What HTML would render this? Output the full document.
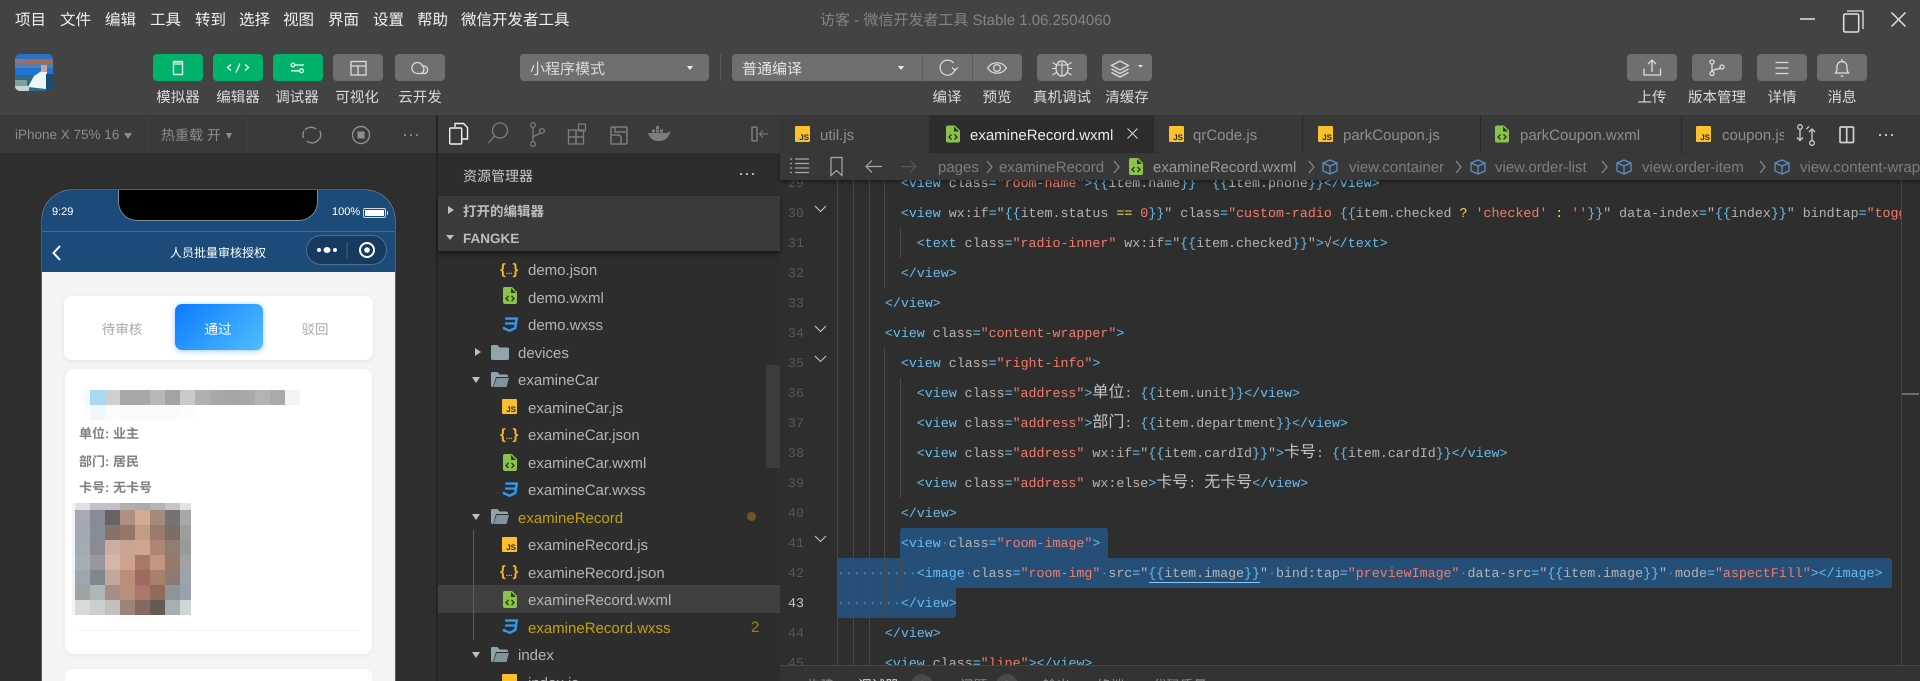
<!DOCTYPE html>
<html lang="zh"><head><meta charset="utf-8"><title>微信开发者工具</title>
<style>
html,body{margin:0;padding:0;width:1920px;height:681px;overflow:hidden;background:#2d2d2d}
#root{position:absolute;left:0;top:0;width:1920px;height:681px;overflow:hidden;font-family:"Liberation Sans","Noto Sans CJK SC",sans-serif;color:#ccc;text-rendering:geometricPrecision}
.a{position:absolute;white-space:nowrap}
.bx{position:absolute}
.m{top:11px;line-height:20px;font-size:15.5px;color:#f0f0f0}
.btn{position:absolute;top:54px;width:50px;height:27px;border-radius:4px;background:#6f6f6f}
.btn.g{background:#00b26a}
.btn svg{position:absolute;left:0;top:0;width:50px;height:27px;fill:none;stroke:#dcdcdc;stroke-width:1.3}
.btn.g svg{stroke:#f0fff8}
.lb{top:88px;line-height:20px;font-size:14.5px;color:#dadada;transform:translateX(-50%)}
.tab{top:125px;line-height:22px;font-size:15px;color:#8f8f8f}
.tr{line-height:29px;font-size:15px;color:#b4b4b4;height:27px}
.js{position:absolute;width:15px;height:15px;background:#fbc02d;color:#2c2c10;font:bold 8px/9px "Liberation Sans",sans-serif;text-align:right;padding:6px 1px 0 0;box-sizing:border-box;border-radius:1px;font-style:normal}
.js2{height:16px;padding-top:7px}
.jn{position:absolute;color:#f4b529;font:bold 15px/16px "Liberation Sans",sans-serif;font-style:normal;width:21px;white-space:nowrap}
.jn small{font-size:8px;vertical-align:0}
.ic{position:absolute}
.tg{position:absolute;width:0;height:0;border-style:solid}
.rt{border-width:4.5px 0 4.5px 6px;border-color:transparent transparent transparent #c0c0c0}
.dn{border-width:6px 4.5px 0 4.5px;border-color:#c0c0c0 transparent transparent transparent}
.ye{color:#c2a00d}
.bc{top:157px;line-height:22px;font-size:15px;color:#7d7d7d}
.ch{position:absolute;top:160px;width:7px;height:14px;fill:none;stroke:#8a8a8a;stroke-width:1.2}
.gd{position:absolute;width:1px;background:#484848}
#code,#nums{font:13.3px/30px "Liberation Mono","Noto Sans CJK SC",monospace}
#code{position:absolute;left:837px;top:169px;width:1064px;height:496px;overflow:hidden;color:#b3b3b3}
#code div,#nums div{height:30px;white-space:pre}
#code b{font-weight:normal;color:#66bdf0}
#code em{font-style:normal;color:#f07c6c}
#code var{font-style:normal;color:#f5d94e}
#code u{text-decoration:none;font-size:16px;line-height:1;color:#c4c4c4;font-family:"Noto Sans CJK SC",sans-serif}
#code i{font-style:normal;color:#5b87a8}
#nums{position:absolute;left:780px;top:169px;width:24px;height:496px;overflow:hidden;text-align:right;color:#575757}
.sel{position:absolute;background:#264f78}
.fold{position:absolute;left:814px;width:13px;height:8px;fill:none;stroke:#c5c5c5;stroke-width:1.1}
.px{position:absolute;display:grid}
.px span{display:block}
.pt{font-size:13px;line-height:20px;color:#808080;font-weight:bold;left:79px}
</style></head><body><div id="root">

<!-- top bar -->
<div class="bx" style="left:0;top:0;width:1920px;height:115px;background:#434343"></div>
<span class="a m" style="left:15px">项目</span><span class="a m" style="left:60px">文件</span><span class="a m" style="left:105px">编辑</span><span class="a m" style="left:150px">工具</span><span class="a m" style="left:195px">转到</span><span class="a m" style="left:239px">选择</span><span class="a m" style="left:283px">视图</span><span class="a m" style="left:328px">界面</span><span class="a m" style="left:373px">设置</span><span class="a m" style="left:417px">帮助</span><span class="a m" style="left:461px">微信开发者工具</span>
<span class="a" style="left:820px;top:11px;line-height:20px;font-size:15px;color:#848484">访客 - 微信开发者工具 Stable 1.06.2504060</span>
<svg class="ic" style="left:1795px;top:5px" width="120" height="28" fill="none" stroke="#e4e4e4" stroke-width="1.5"><path d="M5 14h15" stroke="#bbb" stroke-width="2"/><rect x="48.7" y="9" width="15" height="18" rx="1.5"/><path d="M52 6h16v18" stroke-width="1.3"/><path d="M96.5 7.5l14 14M110.500 7.500l-14 14"/></svg>

<!-- avatar -->
<div class="bx" style="left:15px;top:54px;width:38px;height:37px;border-radius:5px;overflow:hidden;background:#1b6ec4">
<svg width="38" height="37" style="display:block"><rect width="38" height="6" fill="#2a72c4"/><rect y="5" width="38" height="4" fill="#8a7486"/><rect x="10" y="5" width="28" height="5" fill="#a26a55"/><rect y="9" width="38" height="5" fill="#5d7ca2"/><rect y="14" width="38" height="7" fill="#1d74d2"/><rect y="21" width="38" height="16" fill="#2f6a86"/><rect y="26" width="12" height="11" fill="#7fa0a0"/><path d="M13 33l6-11 9-6 4 2-1 17z" fill="#eef4f7"/><rect x="26" y="11" width="6" height="7" fill="#caa690"/><rect x="0" y="32" width="14" height="5" fill="#c8d4d4"/><rect x="31" y="20" width="7" height="17" fill="#1c4c74"/></svg></div>

<!-- left buttons -->
<div class="btn g" style="left:153px"><svg><rect x="20.500" y="7.500" width="9" height="13"/><rect x="21" y="8" width="8" height="3" fill="#8fdcb8" stroke="none"/></svg></div>
<div class="btn g" style="left:213px"><svg><path d="M18 10.500l-3.500 3 3.500 3M32 10.500l3.500 3-3.500 3M27 9.500l-4 9"/></svg></div>
<div class="btn g" style="left:273px"><svg><circle cx="20" cy="11" r="1.800"/><path d="M22 11h9M18 16.800h8"/><circle cx="28.500" cy="16.800" r="1.900"/></svg></div>
<div class="btn" style="left:333px"><svg><rect x="18" y="7.500" width="15" height="13.500"/><path d="M18 12h15M25 12v9"/></svg></div>
<div class="btn" style="left:395px"><svg><path d="M22.500 19.500a5.500 5.500 0 1 1 5-7.500l2 0a4 4 0 0 1 .8 7.500zM26.500 19c3-1 3-4 1.500-7"/></svg></div>
<span class="a lb" style="left:178px">模拟器</span><span class="a lb" style="left:238px">编辑器</span><span class="a lb" style="left:297px">调试器</span><span class="a lb" style="left:357px">可视化</span><span class="a lb" style="left:420px">云开发</span>

<!-- mode selectors -->
<div class="bx" style="left:520px;top:54px;width:189px;height:27px;border-radius:4px;background:#6f6f6f"></div>
<span class="a" style="left:530px;top:60px;line-height:20px;font-size:15px;color:#dcdcdc">小程序模式</span>
<div class="tg dn" style="left:687px;top:66px;border-width:4px 3px 0 3px;border-color:#eee transparent transparent transparent"></div>
<div class="bx" style="left:720px;top:54px;width:1px;height:27px;background:#585858"></div>
<div class="bx" style="left:732px;top:54px;width:290px;height:27px;border-radius:4px;background:#6f6f6f"></div>
<div class="bx" style="left:922px;top:54px;width:1px;height:27px;background:#5c5c5c"></div>
<div class="bx" style="left:972px;top:54px;width:1px;height:27px;background:#5c5c5c"></div>
<span class="a" style="left:742px;top:60px;line-height:20px;font-size:15px;color:#e4e4e4">普通编译</span>
<div class="tg dn" style="left:898px;top:66px;border-width:4px 3px 0 3px;border-color:#eee transparent transparent transparent"></div>
<svg class="ic" style="left:936px;top:58px" width="26" height="20" fill="none" stroke="#dcdcdc" stroke-width="1.200"><path d="M17.500 5a7.500 7.500 0 1 0 1.500 6"/><path d="M16 9.500l3.200 2.800 2.800-3"/></svg>
<svg class="ic" style="left:985px;top:59px" width="24" height="18" fill="none" stroke="#dcdcdc" stroke-width="1.200"><path d="M2.500 9c5-7 14-7 19 0-5 7-14 7-19 0z"/><circle cx="12" cy="9" r="3.400"/></svg>
<div class="btn" style="left:1037px"><svg><ellipse cx="25" cy="14.500" rx="6" ry="7.500"/><path d="M21 8.500c1-2 7-2 8 0M25 8v14M15.500 8.500l4 2.500M34.500 8.500l-4 2.500M15 14.500h4M35 14.500h-4M15.500 21l4-2.500M34.500 21l-4-2.500" stroke-width="1.100"/><path d="M20 11h10" stroke-width="1"/></svg></div>
<div class="btn" style="left:1102px"><svg><path d="M9.500 11.500l8.500-4.500 8.500 4.500-8.500 4.500zM9.500 15l8.500 4.500 8.500-4.500M9.500 18.500l8.500 4.500 8.500-4.500"/><path d="M36 11h5l-2.500 2.500z" fill="#eee" stroke="none"/></svg></div>
<span class="a lb" style="left:947px">编译</span><span class="a lb" style="left:997px">预览</span><span class="a lb" style="left:1062px">真机调试</span><span class="a lb" style="left:1127px">清缓存</span>

<!-- right buttons -->
<div class="btn" style="left:1627px"><svg><path d="M17 14.500v6.500h16.500v-6.500M25 18v-11.500M21 10l4-4 4 4"/></svg></div>
<div class="btn" style="left:1692px"><svg><circle cx="20" cy="8" r="2"/><circle cx="20" cy="19.500" r="2"/><circle cx="30" cy="13" r="2"/><path d="M20 10v7.500M28.500 14.500c-4 .8-8 1-8.500 3"/></svg></div>
<div class="btn" style="left:1757px"><svg><path d="M18.500 8.500h13M18.500 14h13M18.500 19.500h13"/></svg></div>
<div class="btn" style="left:1817px"><svg><path d="M18.500 19c1.500-2 1.500-3 1.500-6.500a5 5 0 0 1 10 0c0 3.500 0 4.500 1.500 6.500zM25 5v2.500M23.500 22h3"/></svg></div>
<span class="a lb" style="left:1652px">上传</span><span class="a lb" style="left:1717px">版本管理</span><span class="a lb" style="left:1782px">详情</span><span class="a lb" style="left:1842px">消息</span>

<!-- simulator toolbar -->
<div class="bx" style="left:0;top:115px;width:436px;height:38px;background:#3a3a3a"></div>
<div class="bx" style="left:147px;top:115px;width:1px;height:38px;background:#3e3e3e"></div>
<div class="bx" style="left:247px;top:115px;width:1px;height:38px;background:#3e3e3e"></div>
<span class="a" style="left:15px;top:125px;line-height:20px;font-size:13.500px;color:#8c8c8c">iPhone X 75% 16</span>
<div class="tg dn" style="left:124px;top:133px;border-width:6px 4px 0 4px;border-color:#8c8c8c transparent transparent transparent"></div>
<span class="a" style="left:161px;top:125px;line-height:20px;font-size:14px;color:#8c8c8c">热重载 开</span>
<div class="tg dn" style="left:226px;top:133px;border-width:6px 3.500px 0 3.500px;border-color:#8c8c8c transparent transparent transparent"></div>
<svg class="ic" style="left:300px;top:123px" width="125" height="24" fill="none" stroke="#8e8e8e" stroke-width="1.400"><path d="M5 7a8 8 0 0 1 11-1M19 16a8 8 0 0 1-12 2M3.500 15a8 8 0 0 1 .5-7M19.800 8a8 8 0 0 1-.3 8"/><circle cx="61" cy="12" r="8.500"/><rect x="57.500" y="8.500" width="7" height="7" fill="#8e8e8e" stroke="none"/><g fill="#8e8e8e" stroke="none"><circle cx="105" cy="12" r="1.100"/><circle cx="111" cy="12" r="1.100"/><circle cx="117" cy="12" r="1.100"/></g></svg>

<!-- phone -->
<div class="bx" style="left:0;top:153px;width:436px;height:528px;background:#2e2e2e"></div>
<div class="bx" style="left:436px;top:115px;width:2px;height:566px;background:#242424"></div>
<div class="bx" style="left:42px;top:190px;width:353px;height:491px;border-radius:30px 30px 0 0;background:#f4f4f4;overflow:hidden;box-shadow:0 0 0 .5px #8a8a8a">
<div class="bx" style="left:0;top:0;width:353px;height:82px;background:#1c4a79"></div>
<div class="bx" style="left:0;top:41px;width:353px;height:1px;background:#456c94"></div>
<div class="bx" style="left:77px;top:-1px;width:198px;height:31px;background:#000;border-radius:0 0 18px 18px;box-shadow:0 0 0 1px #7d8a98"></div>
</div>
<span class="a" style="left:52px;top:203px;line-height:18px;font-size:11px;color:#fff">9:29</span>
<span class="a" style="left:332px;top:203px;line-height:18px;font-size:11px;color:#fff">100%</span>
<div class="bx" style="left:363px;top:208px;width:21px;height:8px;border:1px solid #cfd8e2;box-sizing:content-box;border-radius:2px"><div style="position:absolute;left:1px;top:1px;right:1px;bottom:1px;background:#fff"></div></div>
<div class="bx" style="left:387px;top:211px;width:1px;height:4px;background:#cfd8e2"></div>
<svg class="ic" style="left:50px;top:243px" width="14" height="20" fill="none" stroke="#fff" stroke-width="2"><path d="M10 3l-6.500 7 6.500 7"/></svg>
<span class="a" style="left:218px;top:243px;line-height:20px;font-size:12px;color:#fff;transform:translateX(-50%)">人员批量审核授权</span>
<div class="bx" style="left:306px;top:235px;width:81px;height:30px;border-radius:15px;background:#163a60;box-sizing:border-box;border:1px solid #506f8f"></div>
<svg class="ic" style="left:306px;top:235px" width="81" height="30"><circle cx="13" cy="15" r="2" fill="#fff"/><ellipse cx="21" cy="15" rx="3.500" ry="3" fill="#fff"/><circle cx="29" cy="15" r="2" fill="#fff"/><path d="M41 7v16" stroke="#40607f"/><circle cx="61" cy="15" r="7" fill="none" stroke="#fff" stroke-width="2"/><circle cx="61" cy="15" r="2.800" fill="#fff"/></svg>

<!-- phone content -->
<div class="bx" style="left:64px;top:296px;width:309px;height:64px;background:#fff;border-radius:8px;box-shadow:0 1px 4px rgba(0,0,0,.08)"></div>
<div class="bx" style="left:175px;top:304px;width:88px;height:46px;border-radius:7px;background:linear-gradient(135deg,#0a7bff,#52bdff);box-shadow:0 1px 6px rgba(40,140,255,.45)"></div>
<span class="a" style="left:122px;top:320px;line-height:20px;font-size:13.500px;color:#a8a8a8;transform:translateX(-50%)">待审核</span>
<span class="a" style="left:218px;top:320px;line-height:20px;font-size:13.500px;color:#fff;transform:translateX(-50%)">通过</span>
<span class="a" style="left:315px;top:320px;line-height:20px;font-size:13.500px;color:#a8a8a8;transform:translateX(-50%)">驳回</span>
<div class="bx" style="left:65px;top:369px;width:307px;height:285px;background:#fff;border-radius:8px;box-shadow:0 1px 4px rgba(0,0,0,.07)"></div>
<div class="bx" style="left:65px;top:669px;width:307px;height:12px;background:#fff;border-radius:8px 8px 0 0"></div>
<div class="px" style="left:84px;top:390px;grid-template-columns:6px repeat(14,15px);grid-template-rows:15px 15px">
<span style="background:#f5faff"></span><span style="background:#a9d8f2"></span><span style="background:#cfcfcf"></span><span style="background:#a8a8a8"></span><span style="background:#a8a8a8"></span><span style="background:#b8b8b8"></span><span style="background:#a3a3a3"></span><span style="background:#c9c9c9"></span><span style="background:#b0b0b0"></span><span style="background:#a8a8a8"></span><span style="background:#a5a5a5"></span><span style="background:#a8a8a8"></span><span style="background:#b3b3b3"></span><span style="background:#a9a9a9"></span><span style="background:#f3f3f3"></span>
<span style="background:#fbfdff"></span><span style="background:#eff6fd"></span><span style="background:#fbfbfb"></span><span style="background:#fafafa"></span><span style="background:#fafafa"></span><span style="background:#fafafa"></span><span style="background:#fafafa"></span><span style="background:#fcfcfc"></span><span></span><span></span><span></span><span></span><span></span><span></span><span></span>
</div>
<span class="a pt" style="top:424px">单位: 业主</span>
<span class="a pt" style="top:452px">部门: 居民</span>
<span class="a pt" style="top:478px">卡号: 无卡号</span>
<div class="bx" style="left:72px;top:503px;width:3px;height:112px;background:#f3f3f3"></div>
<div class="px" style="left:75px;top:503px;grid-template-columns:repeat(7,15px) 11px;grid-template-rows:7px repeat(7,15px)">
<span style="background:#e0e0e5"></span><span style="background:#c0c0c8"></span><span style="background:#c0c0c6"></span><span style="background:#b0aeae"></span><span style="background:#aeaaa8"></span><span style="background:#b5b5b5"></span><span style="background:#c5c5c5"></span><span style="background:#e2e2e2"></span>
<span style="background:#a5a9b3"></span><span style="background:#888b96"></span><span style="background:#676264"></span><span style="background:#ae9080"></span><span style="background:#d2ab98"></span><span style="background:#a58a7a"></span><span style="background:#757273"></span><span style="background:#a8a8a8"></span>
<span style="background:#a3a9b3"></span><span style="background:#858d9b"></span><span style="background:#8a7168"></span><span style="background:#957768"></span><span style="background:#c19d88"></span><span style="background:#997a6b"></span><span style="background:#7b6e68"></span><span style="background:#9d9d9e"></span>
<span style="background:#a3aab4"></span><span style="background:#8a8a95"></span><span style="background:#ccaea0"></span><span style="background:#c9a693"></span><span style="background:#cfa592"></span><span style="background:#ae8673"></span><span style="background:#8f7d73"></span><span style="background:#9a9a9c"></span>
<span style="background:#a4aeb5"></span><span style="background:#9a969b"></span><span style="background:#d5b5a8"></span><span style="background:#cfa28f"></span><span style="background:#a67a68"></span><span style="background:#c29680"></span><span style="background:#97786a"></span><span style="background:#9fa3a8"></span>
<span style="background:#a0a6ae"></span><span style="background:#7f878d"></span><span style="background:#c2a89c"></span><span style="background:#bb8d7b"></span><span style="background:#a0695f"></span><span style="background:#a87f6b"></span><span style="background:#8b7b75"></span><span style="background:#9da3ab"></span>
<span style="background:#9ea3a5"></span><span style="background:#b0b5b6"></span><span style="background:#a38f85"></span><span style="background:#ba8f79"></span><span style="background:#a9786a"></span><span style="background:#926c5a"></span><span style="background:#8d949a"></span><span style="background:#9ca2ab"></span>
<span style="background:#d8d9d9"></span><span style="background:#cbcecf"></span><span style="background:#c3bfbb"></span><span style="background:#9b857b"></span><span style="background:#86695e"></span><span style="background:#665a54"></span><span style="background:#a8aeb2"></span><span style="background:#d0d5d8"></span>
</div>
<div class="bx" style="left:79px;top:630px;width:280px;border-top:1px dotted #e8e8e8"></div>

<!-- explorer -->
<div class="bx" style="left:438px;top:115px;width:342px;height:38px;background:#3a3a3a"></div>
<div class="bx" style="left:438px;top:153px;width:342px;height:528px;background:#2d2d2d"></div>
<svg class="ic" style="left:445px;top:120px" width="330" height="30" fill="none" stroke="#7d7d7d" stroke-width="1.300">
<g stroke="#f2f2f2" stroke-width="1.400"><path d="M10 7V3.500h8.500l4 4V19H17"/><rect x="4.700" y="8" width="12" height="16" rx="1"/></g>
<circle cx="55" cy="10.500" r="7.500"/><path d="M49.500 16l-6 7"/>
<circle cx="88" cy="5" r="2.400"/><circle cx="88" cy="24" r="2.400"/><circle cx="97" cy="11" r="2.400"/><path d="M88 7.500v14M95.500 13c-4 3-7 2-7.500 5"/>
<rect x="123.500" y="10" width="7.500" height="7"/><rect x="131" y="10" width="7.500" height="7"/><rect x="123.500" y="17" width="7.500" height="7"/><rect x="131" y="17" width="7.500" height="7"/><rect x="133.500" y="4" width="7" height="7" rx="1"/>
<rect x="166" y="7" width="16" height="17" rx="1" stroke-width="1.500"/><path d="M170 7v5h11M166 15h7c2 0 3 1 3 3v6" stroke-width="1.500"/>
<path d="M203 13h18c2 0 3-1 3.500-2 1 1 1 2 0 3-2 5-6 7-10.500 7-6 0-9-2-11-8z" fill="#7d7d7d" stroke="none"/><g fill="#7d7d7d" stroke="none"><rect x="207" y="9.500" width="3" height="3"/><rect x="211" y="9.500" width="3" height="3"/><rect x="215" y="9.500" width="3" height="3"/><rect x="211" y="6" width="3" height="3"/></g>
<rect x="307" y="7" width="5" height="14" rx="1" stroke-width="1.500"/><path d="M323 14h-8M318 10.500l-3.500 3.500 3.500 3.500" stroke-width="1.100"/>
</svg>
<span class="a" style="left:463px;top:166px;line-height:20px;font-size:14px;color:#c8c8c8">资源管理器</span>
<svg class="ic" style="left:738px;top:170px" width="18" height="8" fill="#ddd"><circle cx="3" cy="4" r="1"/><circle cx="9" cy="4" r="1"/><circle cx="15" cy="4" r="1"/></svg>
<div class="bx" style="left:438px;top:196px;width:342px;height:55px;background:#3a3a3a;box-shadow:0 3px 5px rgba(0,0,0,.45);z-index:2"></div>
<div class="a" style="left:463px;top:202px;line-height:20px;font-size:13.500px;font-weight:bold;color:#bdbdbd;z-index:3">打开的编辑器</div>
<div class="a" style="left:463px;top:229px;line-height:20px;font-size:13.500px;font-weight:bold;color:#bdbdbd;z-index:3">FANGKE</div>
<div class="tg rt" style="left:448px;top:206px;z-index:3"></div>
<div class="tg dn" style="left:446px;top:235px;border-width:5.500px 4px 0 4px;z-index:3"></div>

<svg width="0" height="0" style="position:absolute"><defs>
<symbol id="wx" viewBox="0 0 14 17"><path d="M2 0h7l5 5v10a2 2 0 0 1-2 2H2a2 2 0 0 1-2-2V2a2 2 0 0 1 2-2z" fill="#8bc34a"/><path d="M8 1v5h5z" fill="#2d3a1c"/><path d="M5.500 9l-2.500 2.500 2.500 2.500M8.500 9l2.500 2.500-2.500 2.500" fill="none" stroke="#26320f" stroke-width="1.300"/></symbol>
<symbol id="cs" viewBox="0 0 16 16"><path d="M3.200 1.600h11.500l-1.400 9.400-5.600 2.800L2 11.400 1.800 10" fill="none" stroke="#2f9bf5" stroke-width="2.400"/><path d="M3 6.500h10.500" stroke="#2f9bf5" stroke-width="2.200"/></symbol>
<symbol id="fc" viewBox="0 0 18 15"><path d="M1.500 0h5l2 2.500h8a1.500 1.500 0 0 1 1.500 1.500v9.500a1.500 1.500 0 0 1-1.500 1.500h-15A1.500 1.500 0 0 1 0 13.500v-12A1.500 1.500 0 0 1 1.500 0z" fill="#90a4ae"/></symbol>
<symbol id="fo" viewBox="0 0 18 15"><path d="M1.500 0h5l2 2.500h7A1.500 1.500 0 0 1 17 4v1H5L2 15H1.500A1.500 1.500 0 0 1 0 13.500v-12A1.500 1.500 0 0 1 1.500 0z" fill="#90a4ae"/><path d="M5.500 6H18l-2.500 9H2.500z" fill="#7f939d"/></symbol>
<symbol id="cb" viewBox="0 0 18 18"><path d="M9 2l7 3v8l-7 3-7-3V5zM2 5l7 3 7-3M9 8v8" fill="none" stroke="#5791c9" stroke-width="1.300"/></symbol>
</defs></svg>

<!-- tree -->
<div class="bx" style="left:438px;top:585px;width:342px;height:28px;background:#404040"></div>
<div class="bx" style="left:766px;top:365px;width:14px;height:103px;background:#3c3c3c"></div>
<div class="bx" style="left:473px;top:530px;width:1px;height:110px;background:#5a5a5a"></div>

<i class="jn" style="left:500px;top:262px">{<small>...</small>}</i><span class="a tr" style="left:528px;top:256px">demo.json</span>
<svg class="ic" style="left:503px;top:287px" width="14" height="17"><use href="#wx"/></svg><span class="a tr" style="left:528px;top:284px">demo.wxml</span>
<svg class="ic" style="left:502px;top:317px" width="16" height="16"><use href="#cs"/></svg><span class="a tr" style="left:528px;top:311px">demo.wxss</span>
<div class="tg rt" style="left:475px;top:348px"></div><svg class="ic" style="left:491px;top:345px" width="18" height="15"><use href="#fc"/></svg><span class="a tr" style="left:518px;top:339px">devices</span>
<div class="tg dn" style="left:472px;top:377px"></div><svg class="ic" style="left:491px;top:372px" width="18" height="15"><use href="#fo"/></svg><span class="a tr" style="left:518px;top:366px">examineCar</span>
<i class="js" style="left:502px;top:399px">JS</i><span class="a tr" style="left:528px;top:394px">examineCar.js</span>
<i class="jn" style="left:500px;top:427px">{<small>...</small>}</i><span class="a tr" style="left:528px;top:421px">examineCar.json</span>
<svg class="ic" style="left:503px;top:454px" width="14" height="17"><use href="#wx"/></svg><span class="a tr" style="left:528px;top:449px">examineCar.wxml</span>
<svg class="ic" style="left:502px;top:482px" width="16" height="16"><use href="#cs"/></svg><span class="a tr" style="left:528px;top:476px">examineCar.wxss</span>
<div class="tg dn" style="left:472px;top:514px"></div><svg class="ic" style="left:491px;top:509px" width="18" height="15"><use href="#fo"/></svg><span class="a tr ye" style="left:518px;top:504px">examineRecord</span>
<div class="bx" style="left:747px;top:512px;width:9px;height:9px;border-radius:50%;background:#6e5a1e"></div>
<i class="js" style="left:502px;top:537px">JS</i><span class="a tr" style="left:528px;top:531px">examineRecord.js</span>
<i class="jn" style="left:500px;top:564px">{<small>...</small>}</i><span class="a tr" style="left:528px;top:559px">examineRecord.json</span>
<svg class="ic" style="left:503px;top:591px" width="14" height="17"><use href="#wx"/></svg><span class="a tr" style="left:528px;top:586px">examineRecord.wxml</span>
<svg class="ic" style="left:502px;top:619px" width="16" height="16"><use href="#cs"/></svg><span class="a tr ye" style="left:528px;top:614px">examineRecord.wxss</span>
<span class="a tr" style="left:751px;top:613px;color:#a0860f">2</span>
<div class="tg dn" style="left:472px;top:652px"></div><svg class="ic" style="left:491px;top:647px" width="18" height="15"><use href="#fo"/></svg><span class="a tr" style="left:518px;top:641px">index</span>
<i class="js" style="left:502px;top:674px">JS</i><span class="a tr" style="left:528px;top:669px">index.js</span>

<!-- tabs -->
<div class="bx" style="left:780px;top:115px;width:1140px;height:38px;background:#383838"></div>
<div class="bx" style="left:929px;top:115px;width:224px;height:38px;background:#2d2d2d"></div>
<div class="bx" style="left:1153px;top:115px;width:1px;height:38px;background:#2a2a2a"></div>
<div class="bx" style="left:1302px;top:115px;width:1px;height:38px;background:#2a2a2a"></div>
<div class="bx" style="left:1480px;top:115px;width:1px;height:38px;background:#2a2a2a"></div>
<div class="bx" style="left:1681px;top:115px;width:1px;height:38px;background:#2a2a2a"></div>
<i class="js js2" style="left:795px;top:126px">JS</i><span class="a tab" style="left:820px">util.js</span>
<svg class="ic" style="left:946px;top:125px" width="14" height="18"><use href="#wx"/></svg><span class="a tab" style="left:970px;color:#e8e8e8">examineRecord.wxml</span>
<svg class="ic" style="left:1127px;top:128px" width="11" height="11" fill="none" stroke="#d0d0d0" stroke-width="1.100"><path d="M.5.500l10 10M10.500.500l-10 10"/></svg>
<i class="js js2" style="left:1169px;top:126px">JS</i><span class="a tab" style="left:1193px">qrCode.js</span>
<i class="js js2" style="left:1318px;top:126px">JS</i><span class="a tab" style="left:1343px">parkCoupon.js</span>
<svg class="ic" style="left:1495px;top:125px" width="14" height="18"><use href="#wx"/></svg><span class="a tab" style="left:1520px">parkCoupon.wxml</span>
<i class="js js2" style="left:1696px;top:126px">JS</i><span class="a tab" style="left:1722px;width:62px;overflow:hidden">coupon.js</span>
<svg class="ic" style="left:1794px;top:122px" width="110" height="26" fill="none" stroke="#cfcfcf" stroke-width="1.300"><circle cx="6" cy="5" r="2.300"/><path d="M6 7.500v10"/><path d="M3 15.500l3 3 3-3"/><circle cx="18" cy="21" r="2.300"/><path d="M18 18.500v-10"/><path d="M15 10l3-3 3 3M15 4.500l-2.500 2.500"/><rect x="46" y="5" width="13.500" height="15.500" rx="1" stroke-width="1.700"/><path d="M52.700 5v15" stroke-width="1.700"/><g fill="#cfcfcf" stroke="none"><circle cx="86" cy="13" r="1.100"/><circle cx="92" cy="13" r="1.100"/><circle cx="98" cy="13" r="1.100"/></g></svg>

<!-- selection -->
<div class="bx" style="left:780px;top:153px;width:1140px;height:528px;background:#2e2e2e"></div>
<div class="sel" style="left:900px;top:528px;width:208px;height:32px;border-radius:3px 3px 0 0"></div>
<div class="sel" style="left:837px;top:558px;width:1055px;height:30px;border-radius:3px"></div>
<div class="sel" style="left:837px;top:586px;width:119px;height:32px;border-radius:0 0 3px 3px"></div>

<!-- guides -->
<div class="gd" style="left:837px;top:180px;height:485px"></div>
<div class="gd" style="left:853px;top:180px;height:485px"></div>
<div class="gd" style="left:869px;top:180px;height:485px"></div>
<div class="gd" style="left:884px;top:180px;height:108px"></div>
<div class="gd" style="left:884px;top:348px;height:270px"></div>
<div class="gd" style="left:900px;top:228px;height:30px"></div>
<div class="gd" style="left:900px;top:378px;height:120px"></div>
<div class="gd" style="left:900px;top:558px;height:30px"></div>

<!-- line numbers -->
<div id="nums"><div>29</div><div>30</div><div>31</div><div>32</div><div>33</div><div>34</div><div>35</div><div>36</div><div>37</div><div>38</div><div>39</div><div>40</div><div>41</div><div>42</div><div style="color:#c6c6c6">43</div><div>44</div><div>45</div></div>

<svg class="fold" style="top:205px" viewBox="0 0 13 8"><path d="M1 1l5.500 5.500L12 1"/></svg>
<svg class="fold" style="top:325px" viewBox="0 0 13 8"><path d="M1 1l5.500 5.500L12 1"/></svg>
<svg class="fold" style="top:355px" viewBox="0 0 13 8"><path d="M1 1l5.500 5.500L12 1"/></svg>
<svg class="fold" style="top:535px" viewBox="0 0 13 8"><path d="M1 1l5.500 5.500L12 1"/></svg>

<!-- code -->
<div id="code"><div>        <b>&lt;view</b> class<b>=</b><em>"room-name"</em><b>&gt;{{</b>item.name<b>}}</b>  <b>{{</b>item.phone<b>}}&lt;/view&gt;</b></div><div>        <b>&lt;view</b> wx:if<b>=</b>"<b>{{</b>item.status <var>==</var> <em>0</em><b>}}</b>" class<b>=</b><em>"custom-radio </em><b>{{</b>item.checked <var>?</var> <em>'checked'</em> <var>:</var> <em>''</em><b>}}</b>" data-index<b>=</b>"<b>{{</b>index<b>}}</b>" bindtap<b>=</b><em>"toggleSelection"</em><b>&gt;</b></div><div>          <b>&lt;text</b> class<b>=</b><em>"radio-inner"</em> wx:if<b>=</b>"<b>{{</b>item.checked<b>}}</b>"<b>&gt;</b>√<b>&lt;/text&gt;</b></div><div>        <b>&lt;/view&gt;</b></div><div>      <b>&lt;/view&gt;</b></div><div>      <b>&lt;view</b> class<b>=</b><em>"content-wrapper"</em><b>&gt;</b></div><div>        <b>&lt;view</b> class<b>=</b><em>"right-info"</em><b>&gt;</b></div><div>          <b>&lt;view</b> class<b>=</b><em>"address"</em><b>&gt;</b><u>单位</u>: <b>{{</b>item.unit<b>}}&lt;/view&gt;</b></div><div>          <b>&lt;view</b> class<b>=</b><em>"address"</em><b>&gt;</b><u>部门</u>: <b>{{</b>item.department<b>}}&lt;/view&gt;</b></div><div>          <b>&lt;view</b> class<b>=</b><em>"address"</em> wx:if<b>=</b>"<b>{{</b>item.cardId<b>}}</b>"<b>&gt;</b><u>卡号</u>: <b>{{</b>item.cardId<b>}}&lt;/view&gt;</b></div><div>          <b>&lt;view</b> class<b>=</b><em>"address"</em> wx:else<b>&gt;</b><u>卡号</u>: <u>无卡号</u><b>&lt;/view&gt;</b></div><div>        <b>&lt;/view&gt;</b></div><div>        <b>&lt;view</b><i>·</i>class<b>=</b><em>"room-image"</em><b>&gt;</b></div><div><i>··········</i><b>&lt;image</b><i>·</i>class<b>=</b><em>"room-img"</em><i>·</i>src<b>=</b>"<b>{{</b>item.image<b>}}</b>"<i>·</i>bind:tap<b>=</b><em>"previewImage"</em><i>·</i>data-src<b>=</b>"<b>{{</b>item.image<b>}}</b>"<i>·</i>mode<b>=</b><em>"aspectFill"</em><b>&gt;&lt;/image&gt;</b></div><div><i>········</i><b>&lt;/view&gt;</b></div><div>      <b>&lt;/view&gt;</b></div><div>      <b>&lt;view</b> class<b>=</b><em>"line"</em><b>&gt;&lt;/view&gt;</b></div></div>

<div class="bx" style="left:1149px;top:582px;width:111px;height:1px;background:#8fc8ec"></div>

<!-- scroll ruler -->
<div class="bx" style="left:1901px;top:180px;width:1px;height:485px;background:#454545"></div>
<div class="bx" style="left:1902px;top:393px;width:17px;height:2px;background:#6c6c6c"></div>

<!-- breadcrumb -->
<div class="bx" style="left:780px;top:153px;width:1140px;height:27px;background:#383838;box-shadow:0 2px 4px rgba(0,0,0,.4)"></div>
<svg class="ic" style="left:785px;top:153px" width="140" height="27" fill="none" stroke="#a8a8a8" stroke-width="1.200"><path d="M10 6h14M10 10.500h14M10 15h14M10 19.500h14M5 6h2M5 10.500h2M5 15h2M5 19.500h2"/><path d="M46 4.500h11v18l-5.500-5-5.500 5z"/><path d="M97 13.500H81M87 7.500l-6 6 6 6"/><path d="M116 13.500h15M125 7.500l6 6-6 6" stroke="#565656"/></svg>
<span class="a bc" style="left:938px">pages</span>
<span class="a bc" style="left:999px">examineRecord</span>
<span class="a bc" style="left:1153px;color:#9a9a9a">examineRecord.wxml</span>
<span class="a bc" style="left:1349px">view.container</span>
<span class="a bc" style="left:1495px">view.order-list</span>
<span class="a bc" style="left:1642px">view.order-item</span>
<span class="a bc" style="left:1800px;width:120px;overflow:hidden">view.content-wrapper</span>
<svg class="ch" style="left:986px"><path d="M1 1l5 6-5 6"/></svg>
<svg class="ch" style="left:1113px"><path d="M1 1l5 6-5 6"/></svg>
<svg class="ch" style="left:1308px"><path d="M1 1l5 6-5 6"/></svg>
<svg class="ch" style="left:1455px"><path d="M1 1l5 6-5 6"/></svg>
<svg class="ch" style="left:1601px"><path d="M1 1l5 6-5 6"/></svg>
<svg class="ch" style="left:1759px"><path d="M1 1l5 6-5 6"/></svg>
<svg class="ic" style="left:1129px;top:158px" width="14" height="17"><use href="#wx"/></svg>
<svg class="ic" style="left:1321px;top:158px" width="18" height="18"><use href="#cb"/></svg>
<svg class="ic" style="left:1469px;top:158px" width="18" height="18"><use href="#cb"/></svg>
<svg class="ic" style="left:1615px;top:158px" width="18" height="18"><use href="#cb"/></svg>
<svg class="ic" style="left:1773px;top:158px" width="18" height="18"><use href="#cb"/></svg>

<!-- bottom panel -->
<div class="bx" style="left:780px;top:665px;width:1140px;height:16px;background:#333;border-top:1px solid #484848;box-sizing:border-box"></div>
<div class="bx" style="left:780px;top:666px;width:1140px;height:15px;overflow:hidden">
<div class="bx" style="left:131px;top:8px;width:22px;height:22px;border-radius:50%;background:#4a4a4a"></div>
<div class="bx" style="left:216px;top:8px;width:22px;height:22px;border-radius:50%;background:#4a4a4a"></div>
<span class="a" style="left:27px;top:10px;line-height:20px;font-size:13.500px;color:#8a8a8a">构建</span>
<span class="a" style="left:78px;top:10px;line-height:20px;font-size:13.500px;color:#e4e4e4">调试器</span>
<span class="a" style="left:138px;top:10px;line-height:20px;font-size:13px;color:#e4e4e4">6</span>
<span class="a" style="left:180px;top:10px;line-height:20px;font-size:13.500px;color:#8a8a8a">问题</span>
<span class="a" style="left:223px;top:10px;line-height:20px;font-size:13px;color:#e4e4e4">2</span>
<span class="a" style="left:263px;top:10px;line-height:20px;font-size:13.500px;color:#8a8a8a">输出</span>
<span class="a" style="left:317px;top:10px;line-height:20px;font-size:13.500px;color:#8a8a8a">终端</span>
<span class="a" style="left:373px;top:10px;line-height:20px;font-size:13.500px;color:#8a8a8a">代码质量</span>
</div>
</div></body></html>
